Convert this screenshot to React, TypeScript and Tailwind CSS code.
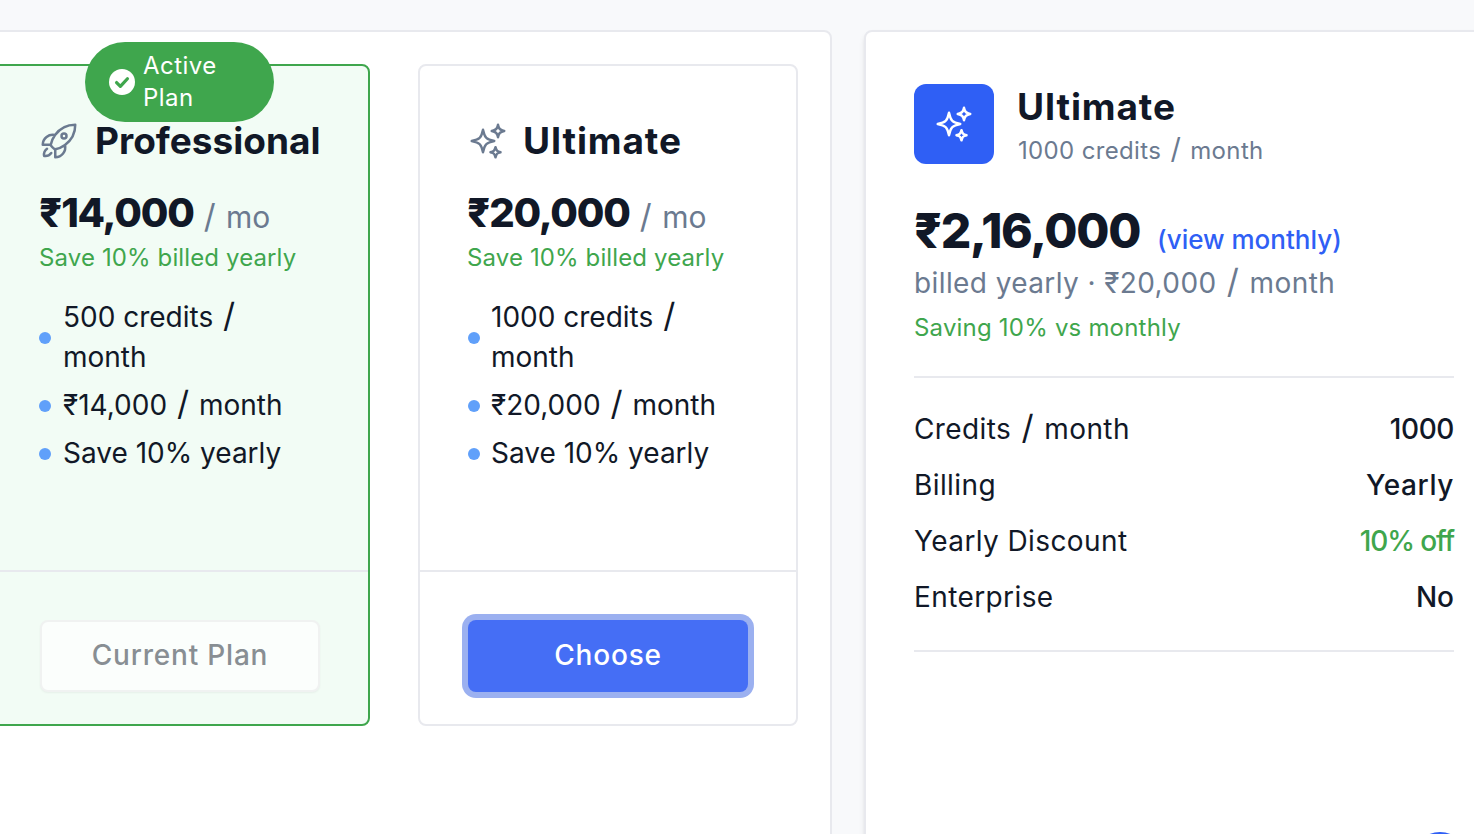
import React from "react";

function Sparkles({ className }: { className: string }) {
  return (
    <svg viewBox="0 0 24 24" fill="none" stroke="currentColor" strokeWidth={1.5} strokeLinecap="round" strokeLinejoin="round" className={className}>
      <path d="M9.813 15.904 9 18.75l-.813-2.846a4.5 4.5 0 0 0-3.09-3.09L2.25 12l2.846-.813a4.5 4.5 0 0 0 3.09-3.09L9 5.25l.813 2.846a4.5 4.5 0 0 0 3.09 3.09L15.75 12l-2.846.813a4.5 4.5 0 0 0-3.09 3.09ZM18.259 8.715 18 9.75l-.259-1.035a3.375 3.375 0 0 0-2.455-2.456L14.25 6l1.036-.259a3.375 3.375 0 0 0 2.455-2.456L18 2.25l.259 1.035a3.375 3.375 0 0 0 2.456 2.456L21.75 6l-1.035.259a3.375 3.375 0 0 0-2.456 2.456ZM16.894 20.567 16.5 21.75l-.394-1.183a2.25 2.25 0 0 0-1.423-1.423L13.5 18.75l1.183-.394a2.25 2.25 0 0 0 1.423-1.423l.394-1.183.394 1.183a2.25 2.25 0 0 0 1.423 1.423l1.183.394-1.183.394a2.25 2.25 0 0 0-1.423 1.423Z" />
    </svg>
  );
}

function Rocket({ className }: { className: string }) {
  return (
    <svg viewBox="0 0 24 24" fill="none" stroke="currentColor" strokeWidth={1.5} strokeLinecap="round" strokeLinejoin="round" className={className}>
      <path d="M15.59 14.37a6 6 0 0 1-5.84 7.38v-4.8m5.84-2.58a14.98 14.98 0 0 0 6.16-12.12A14.98 14.98 0 0 0 9.631 8.41m5.96 5.96a14.926 14.926 0 0 1-5.841 2.58m-.119-8.54a6 6 0 0 0-7.381 5.84h4.8m2.581-5.84a14.927 14.927 0 0 0-2.58 5.84m2.699 2.7c-.103.021-.207.041-.311.06a15.09 15.09 0 0 1-2.448-2.448 14.9 14.9 0 0 1 .06-.312m-2.24 2.39a4.493 4.493 0 0 0-1.757 4.306 4.493 4.493 0 0 0 4.306-1.758M16.5 9a1.5 1.5 0 1 1-3 0 1.5 1.5 0 0 1 3 0Z" />
    </svg>
  );
}

function Slashed({ text }: { text: string }) {
  const parts = text.split(" / ");
  return (
    <>
      {parts.map((p, i) => (
        <React.Fragment key={i}>
          {i > 0 && (
            <>
              {" "}
              <span className="text-[1.2em] leading-[0] mx-[2px]">/</span>{" "}
            </>
          )}
          {p}
        </React.Fragment>
      ))}
    </>
  );
}

function Feature({ text, dotClass }: { text: string; dotClass: string }) {
  return (
    <li className="flex items-center gap-3 text-[28px] leading-[40px] text-[#111827]">
      <span className={dotClass} />
      <span className="-ml-px">
        <Slashed text={text} />
      </span>
    </li>
  );
}

function PlanBody({ icon, name, nameClass, price, features, dotClass }: { icon: React.ReactNode; name: string; nameClass: string; price: string; features: string[]; dotClass: string }) {
  return (
    <div className="flex-1 px-12 pt-[55px]">
      <div className="flex items-center gap-4 h-10">
        {icon}
        <h3 className={nameClass}>{name}</h3>
      </div>
      <div className="flex items-baseline gap-[10px] mt-[32px] h-10 leading-10 whitespace-nowrap -ml-px">
        <span className="text-[40px] font-extrabold text-[#111827] tracking-[-1.2px]">{price}</span>
        <span className="text-[30px] text-[#6b7a90] relative top-px">
          <span className="text-[1.1em] leading-[0] mr-[2px]">/</span> mo
        </span>
      </div>
      <p className="mt-[9px] text-[24px] leading-8 text-[#3fa64d] tracking-[0.12px] whitespace-nowrap -ml-px">Save 10% billed yearly</p>
      <ul className="mt-[23px] flex flex-col gap-2">
        {features.map((f) => (
          <Feature key={f} text={f} dotClass={dotClass} />
        ))}
      </ul>
    </div>
  );
}

function Row({ label, value, valueClass }: { label: string; value: string; valueClass: string }) {
  return (
    <div className="flex justify-between items-center h-10 text-[28px] leading-10">
      <span className="text-[#111827] tracking-[0.4px]">
        <Slashed text={label} />
      </span>
      <span className={valueClass}>{value}</span>
    </div>
  );
}

export default function App() {
  return (
    <div className="h-[834px] w-[1474px] overflow-hidden bg-[#f8f9fb] font-['Inter',sans-serif] pt-[30px]">
      <div className="flex gap-8 -ml-[44px] w-[1548px]">
        <section className="w-[876px] h-[900px] shrink-0 rounded-lg border-2 border-[#e8e9ee] bg-white pt-8 px-8">
          <div className="flex gap-12">
            <article className="relative w-[380px] h-[662px] shrink-0 flex flex-col rounded-lg border-2 border-[#3fa64d] bg-[#f2fcf5]">
              <div className="absolute top-[-24px] left-[93px] w-[189px] flex items-center gap-2 rounded-[40px] bg-[#3fa64d] px-6 py-2 text-[24px] leading-8 tracking-[0.45px] text-white">
                <svg viewBox="0 0 24 24" className="w-[26px] h-[26px] shrink-0">
                  <circle cx="12" cy="12" r="12" fill="#ffffff" />
                  <path d="M7 12.5l3.5 3.5L17 9" fill="none" stroke="#3fa64d" strokeWidth="3" strokeLinecap="round" strokeLinejoin="round" />
                </svg>
                <span>Active Plan</span>
              </div>
              <PlanBody
                icon={<Rocket className="w-10 h-10 shrink-0 text-[#6b7a90] -translate-x-px" />}
                name="Professional"
                nameClass="text-[37px] leading-10 font-bold text-[#111827] -ml-px whitespace-nowrap"
                price="₹14,000"
                features={["500 credits / month", "₹14,000 / month", "Save 10% yearly"]}
                dotClass="w-3 h-3 shrink-0 rounded-full bg-[#60a0fa] translate-y-px -translate-x-px"
              />
              <div className="border-t-2 border-[#e8e9ee] px-12 pt-12 pb-8">
                <button className="w-full h-[72px] pb-[2px] rounded-lg border-2 border-[#f0f2f1] bg-[#fbfefc] shadow-xs text-[28px] font-medium tracking-[0.8px] text-[#888e93]">
                  Current Plan
                </button>
              </div>
            </article>
            <article className="w-[380px] h-[662px] shrink-0 flex flex-col rounded-lg border-2 border-[#e8e9ee] bg-white">
              <PlanBody
                icon={<Sparkles className="w-10 h-10 shrink-0 text-[#6b7a90]" />}
                name="Ultimate"
                nameClass="text-[37px] leading-10 font-bold text-[#111827] tracking-[0.9px] -ml-px whitespace-nowrap"
                price="₹20,000"
                features={["1000 credits / month", "₹20,000 / month", "Save 10% yearly"]}
                dotClass="w-3 h-3 shrink-0 rounded-full bg-[#60a0fa] translate-y-px"
              />
              <div className="border-t-2 border-[#e8e9ee] px-12 pt-12 pb-8">
                <button className="w-full h-[72px] pb-[2px] rounded-lg bg-[#456ef5] ring-[6px] ring-[#9bb0f0] text-[28px] font-medium tracking-[0.8px] text-white">
                  Choose
                </button>
              </div>
            </article>
          </div>
        </section>
        <section className="relative w-[640px] h-[900px] shrink-0 rounded-lg border-2 border-[#e8e9ee] bg-white shadow-md pt-[52px] px-12">
          <div className="flex items-start gap-6">
            <div className="w-20 h-20 rounded-xl bg-[#2f5ff5] flex items-center justify-center">
              <Sparkles className="w-10 h-10 text-white" />
            </div>
            <div>
              <h2 className="text-[37px] leading-[46px] font-bold tracking-[0.9px] text-[#111827] -ml-px">Ultimate</h2>
              <p className="text-[24px] leading-8 mt-[5px] tracking-[0.35px] text-[#6b7a90]">
                <Slashed text="1000 credits / month" />
              </p>
            </div>
          </div>
          <div className="flex items-baseline gap-[17px] mt-[32px] h-[64px] leading-[64px] whitespace-nowrap">
            <span className="text-[48px] font-extrabold tracking-[-1.3px] text-[#111827]">₹2,16,000</span>
            <span className="text-[26px] font-medium text-[#2f5ff5] relative top-px">(view monthly)</span>
          </div>
          <p className="text-[28px] leading-10 tracking-[0.4px] text-[#6b7a90] whitespace-nowrap">
            <Slashed text="billed yearly · ₹20,000 / month" />
          </p>
          <p className="text-[24px] leading-8 mt-[9px] tracking-[0.2px] text-[#3fa64d]">Saving 10% vs monthly</p>
          <div className="mt-[32px] border-y-2 border-[#e8e9ee] pt-[31px] pb-[33px] flex flex-col gap-4">
            <Row label="Credits / month" value="1000" valueClass="font-medium text-[#111827] tracking-[-0.4px]" />
            <Row label="Billing" value="Yearly" valueClass="font-medium text-[#111827] tracking-[0.6px]" />
            <Row label="Yearly Discount" value="10% off" valueClass="font-medium text-[#3fa64d] tracking-[-1.1px]" />
            <Row label="Enterprise" value="No" valueClass="font-medium text-[#111827]" />
          </div>
          <div className="absolute top-[800px] left-[546px] w-14 h-14 rounded-full bg-[#2f5ff5]" />
        </section>
      </div>
    </div>
  );
}
